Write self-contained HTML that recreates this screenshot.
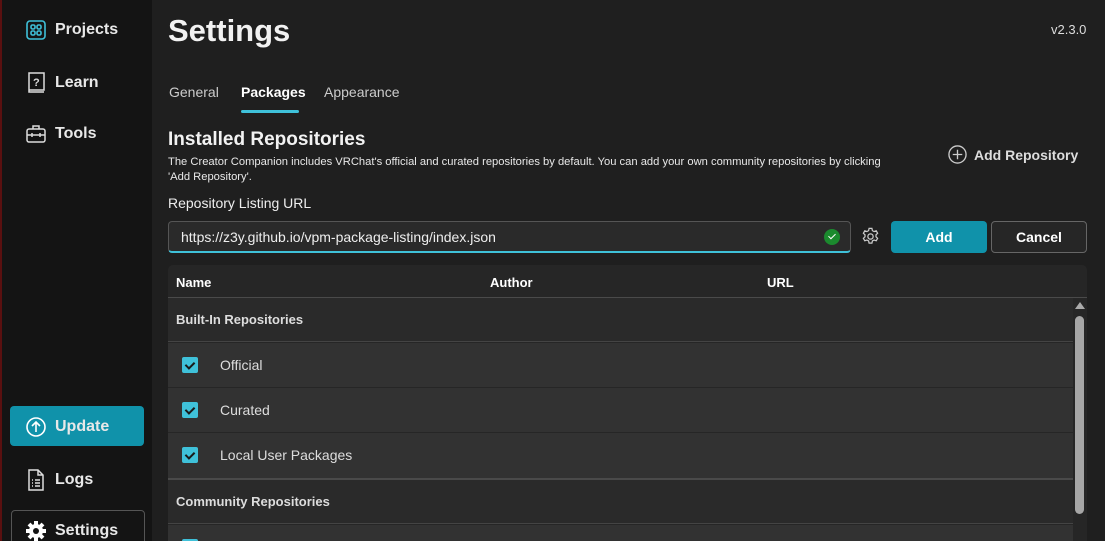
<!DOCTYPE html><html><head><style>
*{box-sizing:border-box;margin:0;padding:0}
html,body{width:1105px;height:541px;overflow:hidden}
body{background:#1f1f1f;font-family:"Liberation Sans",sans-serif;color:#fff;position:relative}
.sb{position:absolute;left:0;top:0;width:152px;height:541px;background:#141414;border-left:2px solid #5a1010}
.nav{position:absolute;left:24px;display:flex;align-items:center;font-size:16px;font-weight:bold;color:#e8e8e8}
.nav svg{margin-right:9px}
.abs{position:absolute}
.tab{position:absolute;top:84px;font-size:14px;color:#ccc}
.row{position:absolute;left:168px;width:905px;background:#323232;border-bottom:1px solid #262626}
.sec{position:absolute;left:168px;width:905px;background:#2a2a2a;font-size:13px;font-weight:bold;color:#ddd;padding-left:8px}
.cb{position:absolute;left:14px;width:16px;height:16px;background:#3fc1d9;border-radius:2px}
.cb:after{content:"";position:absolute;left:5px;top:3px;width:4px;height:7px;border:solid #1a1a1a;border-width:0 2px 2px 0;transform:rotate(45deg)}
.rl{position:absolute;left:52px;font-size:14px;color:#ddd}
</style></head><body>
<div class="sb">
<div class="nav" style="top:20px"><svg width="20" height="20" viewBox="0 0 20 20" fill="none" stroke="#3fc1d9" stroke-width="1.6"><rect x="1" y="1" width="18" height="18" rx="3"/><rect x="5" y="5" width="4" height="4" rx="1.5"/><rect x="11" y="5" width="4" height="4" rx="1.5"/><rect x="5" y="11" width="4" height="4" rx="1.5"/><rect x="11" y="11" width="4" height="4" rx="1.5"/></svg>Projects</div>
<div class="nav" style="top:72px"><svg width="20" height="22" viewBox="0 0 20 22" fill="none" stroke="#ddd" stroke-width="1.5"><path d="M3 1h15v17H3zM3 18v2h15"/><text x="7" y="14" font-size="11" fill="#ddd" stroke="none" font-family="Liberation Sans">?</text></svg>Learn</div>
<div class="nav" style="top:125px"><svg width="20" height="18" viewBox="0 0 20 18" fill="none" stroke="#ddd" stroke-width="1.5"><rect x="1" y="4" width="18" height="13" rx="2"/><path d="M7 4V1h6v3M1 10h18M6 8v4M14 8v4"/></svg>Tools</div>
<div class="abs" style="left:8px;top:406px;width:134px;height:40px;background:#1092aa;border-radius:4px"></div>
<div class="nav" style="top:417px"><svg width="20" height="20" viewBox="0 0 20 20" fill="none" stroke="#fff" stroke-width="1.6"><circle cx="10" cy="10" r="9"/><path d="M10 15V5M6 9l4-4 4 4"/></svg>Update</div>
<div class="nav" style="top:469px"><svg width="20" height="22" viewBox="0 0 20 22" fill="none" stroke="#ddd" stroke-width="1.5"><path d="M3 1h9l5 5v15H3zM12 1v5h5M6 11h1M9 11h5M6 14h1M9 14h5M6 17h1M9 17h5"/></svg>Logs</div>
<div class="abs" style="left:9px;top:510px;width:134px;height:40px;border:1px solid #555;border-radius:4px"></div>
<div class="nav" style="top:521px"><svg width="20" height="20" viewBox="0 0 20 20"><circle cx="10" cy="10" r="7" fill="#fff"/><g stroke="#fff" stroke-width="4"><path d="M10 0v20M0 10h20M3 3l14 14M17 3L3 17"/></g><circle cx="10" cy="10" r="3" fill="#141414"/></svg>Settings</div>
</div>
<div class="abs" style="left:168px;top:13px;font-size:31px;font-weight:bold;color:#f2f2f2">Settings</div>
<div class="abs" style="left:1051px;top:22px;font-size:13px;color:#ddd">v2.3.0</div>
<div class="tab" style="left:169px">General</div>
<div class="tab" style="left:241px;font-weight:bold;color:#fff">Packages</div>
<div class="abs" style="left:241px;top:110px;width:58px;height:3px;background:#3fc1d9;border-radius:2px"></div>
<div class="tab" style="left:324px">Appearance</div>
<div class="abs" style="left:168px;top:129px;font-size:19px;font-weight:bold;color:#f2f2f2">Installed Repositories</div>
<div class="abs" style="left:168px;top:155px;font-size:11.2px;line-height:15px;color:#e8e8e8;width:735px">The Creator Companion includes VRChat's official and curated repositories by default. You can add your own community repositories by clicking 'Add Repository'.</div>
<div class="abs" style="left:948px;top:145px;display:flex;align-items:center;font-size:14px;font-weight:bold;color:#ddd"><svg width="19" height="19" viewBox="0 0 20 20" fill="none" stroke="#ccc" stroke-width="1.4" style="margin-right:7px"><circle cx="10" cy="10" r="9"/><path d="M10 5v10M5 10h10"/></svg>Add Repository</div>
<div class="abs" style="left:168px;top:195px;font-size:14px;color:#eee">Repository Listing URL</div>
<div class="abs" style="left:168px;top:221px;width:683px;height:32px;background:#2a2a2a;border:1px solid #555;border-bottom:2px solid #3fc1d9;border-radius:4px;font-size:14px;color:#eee;padding:7px 0 0 12px">https://z3y.github.io/vpm-package-listing/index.json</div>
<div class="abs" style="left:824px;top:229px;width:16px;height:16px;border-radius:50%;background:#1b8a2e"></div>
<div class="abs" style="left:830px;top:232px;width:4px;height:7px;border:solid #fff;border-width:0 1.5px 1.5px 0;transform:rotate(45deg)"></div>
<svg class="abs" style="left:861px;top:227px" width="19" height="19" viewBox="0 0 20 20" fill="none" stroke="#ccc" stroke-width="1.3"><path d="M8.5 1.5h3l.5 2.3 1.8 1 2.2-.8 1.5 2.6-1.7 1.6v2.1l1.7 1.6-1.5 2.6-2.2-.8-1.8 1-.5 2.3h-3l-.5-2.3-1.8-1-2.2.8-1.5-2.6 1.7-1.6V8.2L2.5 6.6 4 4l2.2.8 1.8-1z"/><circle cx="10" cy="10" r="2.8"/></svg>
<div class="abs" style="left:891px;top:221px;width:96px;height:32px;background:#1092aa;border-radius:4px;font-size:14px;font-weight:bold;text-align:center;line-height:32px">Add</div>
<div class="abs" style="left:991px;top:221px;width:96px;height:32px;background:#262626;border:1px solid #666;border-radius:4px;font-size:14px;font-weight:bold;text-align:center;line-height:30px">Cancel</div>
<div class="abs" style="left:168px;top:265px;width:919px;height:276px;background:#262626;border-radius:5px 5px 0 0"></div>
<div class="abs" style="left:168px;top:297px;width:919px;height:1px;background:#4a4a4a"></div>
<div class="abs" style="left:176px;top:275px;font-size:13px;font-weight:bold">Name</div>
<div class="abs" style="left:490px;top:275px;font-size:13px;font-weight:bold">Author</div>
<div class="abs" style="left:767px;top:275px;font-size:13px;font-weight:bold">URL</div>
<div class="sec" style="top:298px;height:44px;line-height:44px;border-bottom:1px solid #444">Built-In Repositories</div>
<div class="row" style="top:343px;height:45px"><div class="cb" style="top:14px"></div><div class="rl" style="top:14px">Official</div></div>
<div class="row" style="top:388px;height:45px"><div class="cb" style="top:14px"></div><div class="rl" style="top:14px">Curated</div></div>
<div class="row" style="top:433px;height:45px;border-bottom:none"><div class="cb" style="top:14px"></div><div class="rl" style="top:14px">Local User Packages</div></div>
<div class="abs" style="left:168px;top:478px;width:905px;height:2px;background:#4a4a4a"></div>
<div class="sec" style="top:480px;height:44px;line-height:44px;border-bottom:1px solid #444">Community Repositories</div>
<div class="row" style="top:525px;height:16px;border-bottom:none"><div class="cb" style="top:14px"></div></div>
<div class="abs" style="left:1075px;top:302px;width:0;height:0;border-left:5px solid transparent;border-right:5px solid transparent;border-bottom:7px solid #aaa"></div>
<div class="abs" style="left:1075px;top:316px;width:9px;height:198px;background:#a6a6a6;border-radius:5px"></div>
</body></html>
